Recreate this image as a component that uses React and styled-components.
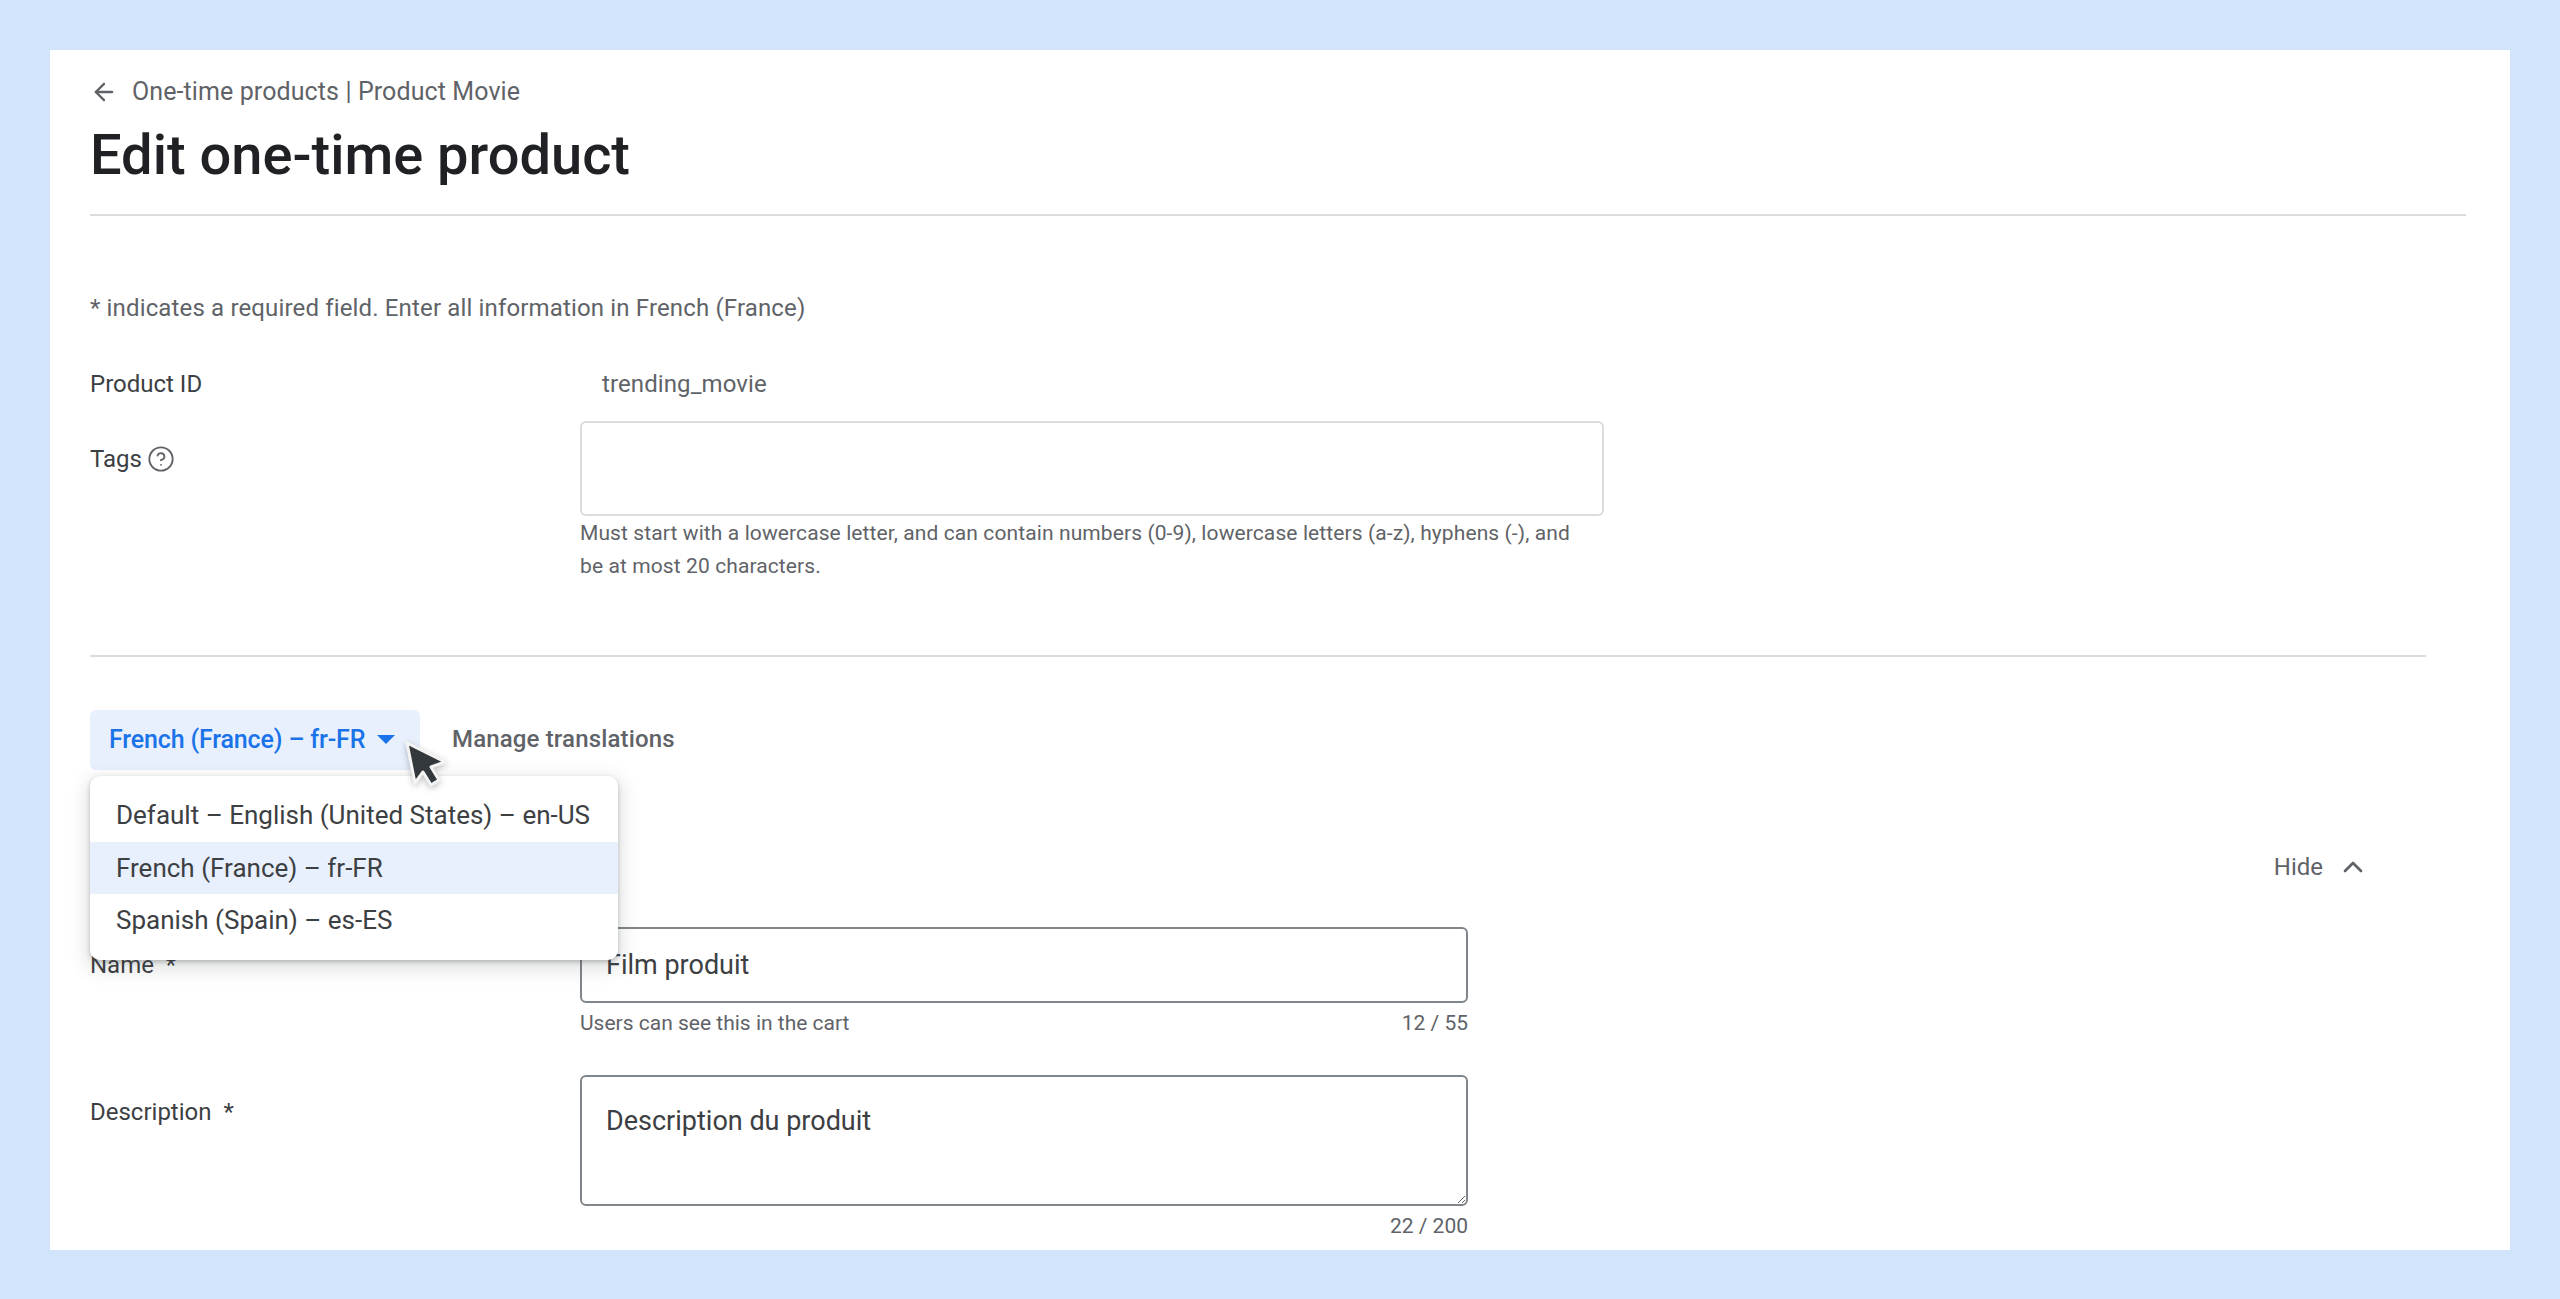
import { ArrowLeft, ChevronUp, CircleHelp } from "lucide-react";
import styled, { createGlobalStyle } from "styled-components";

const GlobalStyle = createGlobalStyle`
  * {
    box-sizing: border-box;
  }
  body {
    margin: 0;
    background: #d2e3fc;
    font-family: Roboto, "Liberation Sans", sans-serif;
    color: #5f6368;
  }
`;

const Page = styled.div`
  height: 1299px;
  padding: 50px;
  overflow: hidden;
`;
const Card = styled.main`
  position: relative;
  height: 1200px;
  padding: 24px 44px 0 40px;
  background: #fff;
  overflow: hidden;
`;
const Header = styled.header`
  padding-bottom: 27px;
  border-bottom: 2px solid #dadce0;
`;
const Breadcrumb = styled.nav`
  display: flex;
  align-items: center;
  gap: 14px;
  height: 36px;
  font-size: 25px;
  line-height: 36px;
  letter-spacing: 0.1px;
`;
const Title = styled.h1`
  margin: 13px 0 0;
  font-size: 56px;
  line-height: 64px;
  font-weight: 500;
  color: #202124;
`;
const Note = styled.p`
  margin: 76px 0 0;
  font-size: 24px;
  line-height: 32px;
  letter-spacing: 0.15px;
`;
const Row = styled.div`
  display: grid;
  grid-template-columns: 490px 1fr;
  margin-top: ${(p) => p.$top}px;
`;
const Label = styled.div`
  display: flex;
  align-items: center;
  gap: ${(p) => p.$gap || 0}px;
  height: 32px;
  margin-top: ${(p) => p.$top || 0}px;
  font-size: 24px;
  line-height: 32px;
  color: #3c4043;
`;
const Value = styled.div`
  padding-left: 22px;
  font-size: 24px;
  line-height: 32px;
  letter-spacing: 0.1px;
`;
const TagsBox = styled.div`
  width: 1024px;
  height: 95px;
  border: 2px solid #dadce0;
  border-radius: 6px;
`;
const Help = styled.p`
  width: 1000px;
  margin: 1px 0 0;
  font-size: 21px;
  line-height: 33px;
  letter-spacing: 0.1px;
`;
const Divider = styled.hr`
  width: 2336px;
  height: 2px;
  margin: 72px 0 0;
  border: 0;
  background: #dadce0;
`;
const LocaleBar = styled.div`
  display: flex;
  align-items: center;
  gap: 32px;
  margin-top: 53px;
`;
const LocaleButton = styled.button`
  display: flex;
  align-items: center;
  gap: 12px;
  width: 330px;
  height: 60px;
  padding: 0 0 2px 19px;
  border: 0;
  border-radius: 6px;
  background: #e8f0fe;
  color: #1a73e8;
  font: 500 25px Roboto, sans-serif;
  letter-spacing: -0.15px;
`;
const Caret = styled.span`
  width: 0;
  height: 0;
  border-left: 9px solid transparent;
  border-right: 9px solid transparent;
  border-top: 9px solid #1a73e8;
`;
const ManageLink = styled.span`
  padding-bottom: 2px;
  font-size: 24px;
  font-weight: 500;
  letter-spacing: 0.15px;
`;
const Menu = styled.ul`
  position: absolute;
  left: 40px;
  top: 726px;
  z-index: 2;
  width: 528px;
  height: 184px;
  margin: 0;
  padding: 13px 0 0;
  list-style: none;
  border-radius: 10px;
  background: #fff;
  box-shadow: 0 2px 4px rgba(60, 64, 67, 0.3), 0 6px 18px 4px rgba(60, 64, 67, 0.15);
`;
const MenuItem = styled.li`
  height: 52.5px;
  padding-left: 26px;
  background: ${(p) => (p.$active ? "#e8f0fe" : "transparent")};
  color: #3c4043;
  font-size: 26px;
  line-height: 52px;
`;
const Pointer = styled.svg`
  position: absolute;
  left: 352px;
  top: 688px;
  z-index: 3;
  filter: drop-shadow(0 2px 3px rgba(0, 0, 0, 0.25));
`;
const HideRow = styled.div`
  display: flex;
  justify-content: flex-end;
  align-items: center;
  gap: 14px;
  width: 2322px;
  height: 40px;
  margin-top: 77px;
  padding-right: 43px;
  font-size: 24px;
`;
const FieldColumn = styled.div`
  width: 888px;
`;
const TextInput = styled.input`
  display: block;
  width: 100%;
  height: 76px;
  padding: 0 24px;
  border: 2px solid #80868b;
  border-radius: 6px;
  background: #fff;
  color: #3c4043;
  font: 400 27px Roboto, sans-serif;
`;
const TextArea = styled.textarea`
  display: block;
  width: 100%;
  height: 131px;
  padding: 28px 24px;
  border: 2px solid #80868b;
  border-radius: 6px;
  color: #3c4043;
  font: 400 27px/32px Roboto, sans-serif;
`;
const Meta = styled.div`
  display: flex;
  justify-content: ${(p) => (p.$end ? "flex-end" : "space-between")};
  margin-top: ${(p) => p.$top}px;
  font-size: 21px;
  line-height: 28px;
`;

const App = () => {
  return (
    <Page>
      <GlobalStyle />
      <Card>
        <Header>
          <Breadcrumb>
            <ArrowLeft size={28} strokeWidth={2} />
            <span>One-time products | Product Movie</span>
          </Breadcrumb>
          <Title>Edit one-time product</Title>
        </Header>
        <Note>* indicates a required field. Enter all information in French (France)</Note>
        <Row $top={44}>
          <Label>Product ID</Label>
          <Value>trending_movie</Value>
        </Row>
        <Row $top={21}>
          <Label $top={22} $gap={5}>
            Tags <CircleHelp size={28} strokeWidth={1.6} color="#5f6368" />
          </Label>
          <div>
            <TagsBox />
            <Help>
              Must start with a lowercase letter, and can contain numbers (0-9), lowercase letters
              (a-z), hyphens (-), and be at most 20 characters.
            </Help>
          </div>
        </Row>
        <Divider />
        <LocaleBar>
          <LocaleButton>
            French (France) – fr-FR
            <Caret />
          </LocaleButton>
          <ManageLink>Manage translations</ManageLink>
        </LocaleBar>
        <Menu>
          <MenuItem>Default – English (United States) – en-US</MenuItem>
          <MenuItem $active>French (France) – fr-FR</MenuItem>
          <MenuItem>Spanish (Spain) – es-ES</MenuItem>
        </Menu>
        <Pointer width="48" height="56" viewBox="0 0 48 56">
          <path
            d="M5 5 L43 24 L29 29 L37 42 L29 47 L21 34 L13 45 Z"
            fill="#32383b"
            stroke="#f4f4f4"
            strokeWidth="3"
            strokeLinejoin="round"
          />
        </Pointer>
        <HideRow>
          Hide <ChevronUp size={32} strokeWidth={2} />
        </HideRow>
        <Row $top={40}>
          <Label $top={22}>Name&nbsp; *</Label>
          <FieldColumn>
            <TextInput readOnly value="Film produit" />
            <Meta $top={6}>
              <span>Users can see this in the cart</span>
              <span>12 / 55</span>
            </Meta>
          </FieldColumn>
        </Row>
        <Row $top={38}>
          <Label $top={21}>Description&nbsp; *</Label>
          <FieldColumn>
            <TextArea readOnly defaultValue="Description du produit" />
            <Meta $top={6} $end>
              <span>22 / 200</span>
            </Meta>
          </FieldColumn>
        </Row>
      </Card>
    </Page>
  );
};

export default App;
